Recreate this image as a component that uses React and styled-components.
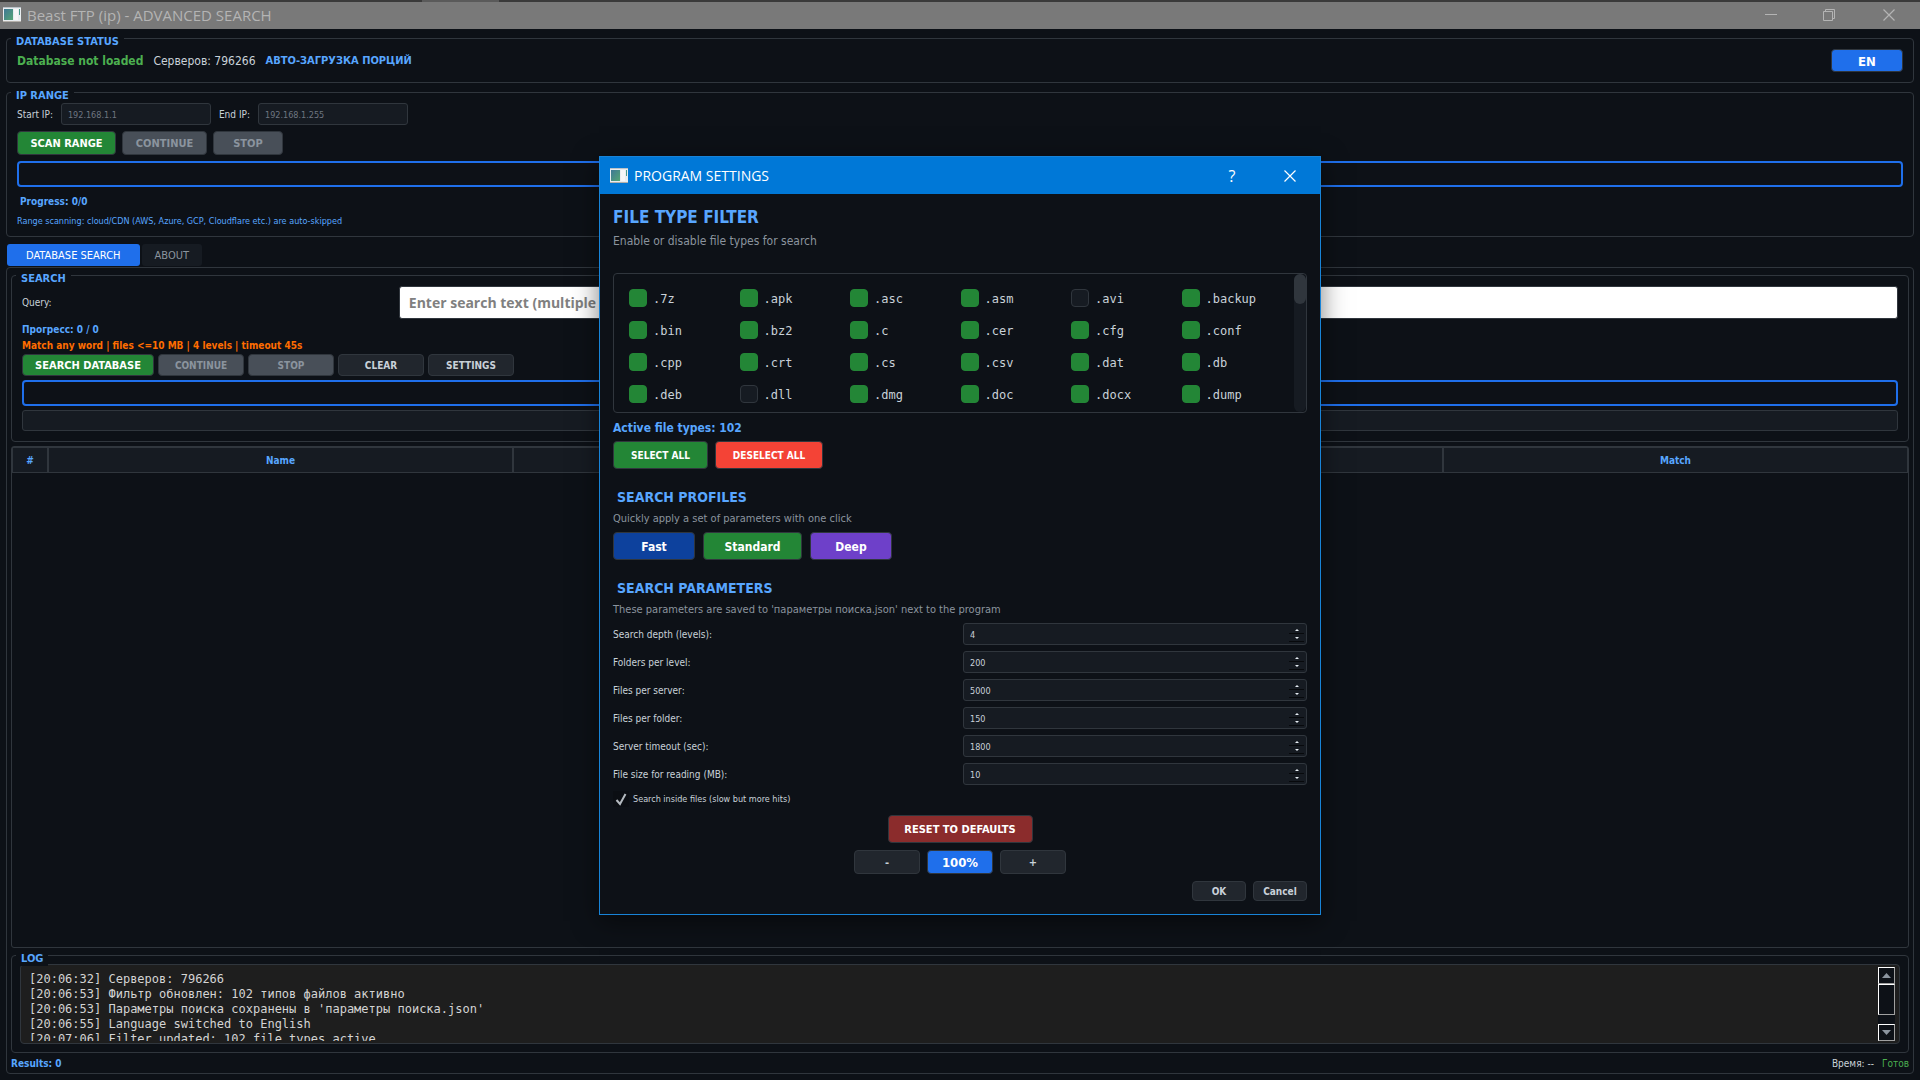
import React, { useState } from "react";
import styled, { createGlobalStyle } from "styled-components";

const GlobalStyle = createGlobalStyle`
    * {
        box-sizing: border-box;
    }

    body {
        margin: 0;
        background-color: #0d1117;
        color: #c9d1d9;
        font-family: "DejaVu Sans Condensed", "DejaVu Sans", sans-serif;
        font-size: 10px;
    }

    h1, h2, h3, p {
        margin: 0;
    }

    button, input {
        font-family: inherit;
    }
`;

// Window
const Window = styled.div`
    min-height: 100vh;
    display: flex;
    flex-direction: column;
`;

const DesktopStrip = styled.div`
    height: 2px;
    background: linear-gradient(90deg, #3a3a3a 22%, #5a5a5a 22%, #5a5a5a 26%, #3a3a3a 26%);
`;

const TitleBar = styled.header`
    display: flex;
    align-items: center;
    height: 27px;
    padding: 0 0 2px 3px;
    background-color: #797979;
    color: #b4b4b4;

    h1 {
        flex: 1;
        margin-left: 6px;
        font: 400 15px/20px "Open Sans", sans-serif;
    }
`;

const CaptionButton = styled.button`
    display: flex;
    align-items: center;
    justify-content: center;
    width: ${props => props.$width || 58}px;
    height: 100%;
    padding: 0;
    border: 0;
    background: none;
    color: inherit;
    font: 400 16px/20px "Open Sans", sans-serif;
`;

const Content = styled.main`
    flex: 1;
    display: flex;
    flex-direction: column;
    padding: 9px 6px 6px;
`;

// Group boxes
const Group = styled.section`
    position: relative;
    display: flex;
    flex-direction: column;
    gap: ${props => props.$gap || 6}px;
    padding: ${props => props.$padding || "10px"};
    border: 1px solid #30363d;
    border-radius: 4px;
`;

const GroupTitle = styled.h2`
    position: absolute;
    top: -4px;
    left: 4px;
    padding: 0 5px;
    background-color: #0d1117;
    color: #58a6ff;
    font-size: 11px;
    line-height: 14px;
`;

const Row = styled.div`
    display: flex;
    align-items: center;
    justify-content: ${props => props.$justify || "flex-start"};
    gap: ${props => props.$gap || 8}px;
`;

const Spacer = styled.div`
    flex: 1;
`;

const Stack = styled.div`
    display: flex;
    flex-direction: column;
    gap: ${props => props.$gap}px;
`;

const Text = styled.span`
    color: ${props => props.$color || "#c9d1d9"};
    font-size: ${props => props.$size || 10}px;
    font-weight: ${props => (props.$bold ? 700 : 400)};
    line-height: ${props => props.$line || 14}px;
    padding-left: ${props => props.$indent || 0}px;
`;

const Label = styled.label`
    padding-top: 1px;
    font-size: 10px;
    line-height: 14px;
`;

// Controls
const variants = {
    plain: ["#21262d", "#c9d1d9"],
    disabled: ["#484f58", "#8b949e"],
    green: ["#238636", "#ffffff"],
    red: ["#f44336", "#ffffff"],
    maroon: ["#8b2c2c", "#ffffff"],
    navy: ["#0d419d", "#ffffff"],
    purple: ["#6e40c9", "#ffffff"],
    blue: ["#1f6feb", "#ffffff"],
};

const Button = styled.button`
    width: ${props => props.$width}px;
    height: ${props => props.$height || 24}px;
    padding: 2px 0 0;
    border: 1px solid #30363d;
    border-radius: 4px;
    background-color: ${props => variants[props.$variant || "plain"][0]};
    color: ${props => variants[props.$variant || "plain"][1]};
    font-size: ${props => props.$size || 11}px;
    font-weight: 700;
    line-height: 16px;
    white-space: nowrap;
`;

const IpInput = styled.input`
    width: 150px;
    height: 22px;
    padding: 1px 6px 0;
    border: 1px solid #30363d;
    border-radius: 3px;
    background-color: #161b22;
    color: #c9d1d9;
    font-size: 9px;

    &::placeholder {
        color: #6e7681;
        opacity: 1;
    }
`;

const ProgressBar = styled.div`
    height: 26px;
    border: 2px solid #1f6feb;
    border-radius: 4px;
`;

const CurrentFile = styled.div`
    height: 21px;
    border: 1px solid #30363d;
    border-radius: 3px;
    background-color: #161b22;
`;

// Tabs
const Tabs = styled.nav`
    display: flex;
    gap: 2px;
    margin: 7px 1px 1px;
`;

const Tab = styled.button`
    height: 22px;
    padding: 0 ${props => (props.$active ? 19 : 13)}px;
    border: 0;
    border-radius: 3px;
    background-color: ${props => (props.$active ? "#1f6feb" : "#161b22")};
    color: ${props => (props.$active ? "#ffffff" : "#8b949e")};
    font-size: 11px;
`;

const Pane = styled.div`
    flex: 1;
    display: flex;
    flex-direction: column;
    gap: 4px;
    padding: 7px 4px 2px;
    border: 1px solid #30363d;
    border-radius: 4px;
`;

const QueryRow = styled.div`
    display: grid;
    grid-template-columns: 1fr 4fr;
    gap: 2px;
    align-items: center;
`;

const QueryInput = styled.input`
    height: 33px;
    padding: 0 9px;
    border: 1px solid #30363d;
    border-radius: 3px;
    background-color: #ffffff;
    font: 700 14px/20px "Open Sans", sans-serif;

    &::placeholder {
        color: #808080;
        opacity: 1;
    }
`;

const ResultsFrame = styled.div`
    flex: 1;
    min-height: 200px;
    margin-bottom: 3px;
    border: 1px solid #30363d;
    border-radius: 3px;
`;

const ResultsTable = styled.table`
    width: 100%;
    table-layout: fixed;
    border-spacing: 0;

    th {
        height: 26px;
        padding: 0;
        border: 1px solid #30363d;
        background-color: #161b22;
        color: #58a6ff;
        font-size: 10px;
    }

    th:first-child {
        width: 36px;
    }
`;

// Log
const LogBox = styled.div`
    display: flex;
    height: 80px;
    padding: 2px 4px 2px 8px;
    border: 1px solid #30363d;
    border-radius: 4px;
    background-color: #1e1e1e;
`;

const LogText = styled.pre`
    flex: 1;
    margin: 0;
    padding-top: 5px;
    overflow: hidden;
    color: #d4d4d4;
    font: 12px/15px "DejaVu Sans Mono", monospace;
`;

const LogScroll = styled.div`
    display: flex;
    flex-direction: column;
    width: 17px;
    background-color: #0d1117;
`;

const ScrollPart = styled.div`
    display: flex;
    align-items: center;
    justify-content: center;
    height: ${props => props.$height}px;
    border: 1px solid;
    border-color: #ffffff #a0a0a0 #a0a0a0 #ffffff;
`;

// Dialog
const Overlay = styled.div`
    position: absolute;
    top: 156px;
    left: 0;
    right: 0;
    display: flex;
    justify-content: center;
    pointer-events: none;
`;

const Dialog = styled.section`
    width: 722px;
    border: 1px solid #1883d7;
    background-color: #0d1117;
    box-shadow: 0 6px 24px rgba(0, 0, 0, 0.5);
    pointer-events: auto;
`;

const DialogTitle = styled.header`
    display: flex;
    align-items: center;
    height: 37px;
    padding-left: 10px;
    background-color: #0078d7;
    color: #ffffff;

    h2 {
        flex: 1;
        margin-left: 6px;
        font: 400 14px/20px "Open Sans", sans-serif;
    }
`;

const DialogBody = styled.div`
    padding: 13px;
`;

const Heading = styled.h3`
    padding-left: ${props => (props.$large ? 0 : 4)}px;
    margin-top: ${props => (props.$large ? 0 : 18)}px;
    color: #58a6ff;
    font-size: ${props => (props.$large ? 17 : 14)}px;
    line-height: 20px;
`;

const Hint = styled.p`
    margin: ${props => (props.$large ? "6px 0 24px" : "4px 0 5px")};
    color: #8b949e;
    font-size: ${props => (props.$large ? 12 : 11)}px;
    line-height: 16px;
`;

const TypesFrame = styled.div`
    display: flex;
    height: 140px;
    border: 1px solid #30363d;
    border-radius: 4px;
    overflow: hidden;
`;

const TypesGrid = styled.div`
    flex: 1;
    display: grid;
    grid-template-columns: repeat(6, 1fr);
    grid-auto-rows: 18px;
    row-gap: 14px;
    padding: 15px 2px 0 15px;
`;

const TypeItem = styled.label`
    display: flex;
    align-items: center;
    gap: 6px;
    font: 12px/18px "DejaVu Sans Mono", monospace;

    span {
        padding-top: 1px;
    }

    input {
        appearance: none;
        width: 18px;
        height: 18px;
        margin: 0;
        border: 1px solid #30363d;
        border-radius: 4px;
        background-color: #161b22;
    }

    input:checked {
        border-color: #238636;
        background-color: #238636;
    }
`;

const TypesScroll = styled.div`
    width: 12px;
    border-radius: 6px;
    background-color: #161b22;

    div {
        height: 30px;
        border-radius: 6px;
        background-color: #30363d;
    }
`;

const ActiveCount = styled.p`
    margin: 6px 0 4px;
    color: #58a6ff;
    font-size: 12px;
    font-weight: 700;
    line-height: 18px;
`;

const ParamRow = styled.div`
    display: grid;
    grid-template-columns: 350px 1fr;
    align-items: center;
`;

const SpinBox = styled.div`
    display: flex;
    align-items: center;
    height: 22px;
    padding-right: 2px;
    border: 1px solid #30363d;
    border-radius: 3px;
    background-color: #161b22;

    input {
        flex: 1;
        min-width: 0;
        padding: 1px 6px 0;
        border: 0;
        background: none;
        color: #c9d1d9;
        font-size: 9px;
        appearance: textfield;
    }

    input::-webkit-inner-spin-button {
        appearance: none;
    }
`;

const SpinButton = styled.button`
    display: flex;
    align-items: center;
    justify-content: center;
    width: 15px;
    height: 8px;
    padding: 0;
    border: 0;
    border-bottom: 1px solid #07090c;
    background: none;
    color: #e6edf3;
`;

const InsideFiles = styled.label`
    display: flex;
    align-items: center;
    gap: 4px;
    margin: 4px 0 6px;
    font-size: 9px;
    line-height: 20px;

    input {
        appearance: none;
        width: 16px;
        height: 16px;
        margin: 0;
    }

    input:checked {
        background: #0b0e13;
    }
`;

const CheckHolder = styled.span`
    position: relative;
    display: flex;

    svg {
        position: absolute;
        top: 2px;
        left: 2px;
        pointer-events: none;
    }
`;

const DialogRows = styled.div`
    display: flex;
    flex-direction: column;
    gap: 7px;
`;

const WindowIcon = () => (
    <svg width="18" height="16" viewBox="0 0 18 16" aria-hidden="true">
        <defs>
            <linearGradient id="pane" x1="0" y1="0" x2="1" y2="1">
                <stop offset="0" stopColor="#3f7896" />
                <stop offset="1" stopColor="#55a574" />
            </linearGradient>
        </defs>
        <rect x="0" y="0" width="18" height="15" fill="#e9edf0" />
        <rect x="0" y="0" width="18" height="1" fill="#b9c2c8" />
        <rect x="0" y="14" width="18" height="1" fill="#b4b0aa" />
        <rect x="1" y="2" width="9" height="11" fill="url(#pane)" />
        <rect x="11" y="2" width="4" height="11" fill="#f7f7f7" />
        <rect x="16" y="2" width="1" height="6" fill="#4a9a8a" />
    </svg>
);

const CloseIcon = () => (
    <svg width="12" height="12" viewBox="0 0 12 12" aria-hidden="true">
        <path d="M0.5 0.5 11.5 11.5M11.5 0.5 0.5 11.5" stroke="currentColor" strokeWidth="1.2" />
    </svg>
);

const Arrow = ({ down, width = 9, height = 5, color = "currentColor" }) => (
    <svg width={width} height={height} viewBox="0 0 8 4" preserveAspectRatio="none" aria-hidden="true">
        <path d={down ? "M0 0h8L4 4z" : "M0 4h8L4 0z"} fill={color} />
    </svg>
);

const fileTypes = [
    ".7z", ".apk", ".asc", ".asm", ".avi", ".backup",
    ".bin", ".bz2", ".c", ".cer", ".cfg", ".conf",
    ".cpp", ".crt", ".cs", ".csv", ".dat", ".db",
    ".deb", ".dll", ".dmg", ".doc", ".docx", ".dump",
];

const params = [
    ["depth", "Search depth (levels):", 4],
    ["folders", "Folders per level:", 200],
    ["server-files", "Files per server:", 5000],
    ["folder-files", "Files per folder:", 150],
    ["timeout", "Server timeout (sec):", 1800],
    ["size", "File size for reading (MB):", 10],
];

const logLines = [
    "[20:06:32] Серверов: 796266",
    "[20:06:53] Фильтр обновлен: 102 типов файлов активно",
    "[20:06:53] Параметры поиска сохранены в 'параметры поиска.json'",
    "[20:06:55] Language switched to English",
    "[20:07:06] Filter updated: 102 file types active",
];

const SettingsDialog = () => {
    const [disabledTypes, setDisabledTypes] = useState([".avi", ".dll"]);

    const toggleType = (type) => {
        setDisabledTypes(
            disabledTypes.includes(type)
                ? disabledTypes.filter(item => item !== type)
                : [...disabledTypes, type]
        );
    };

    return (
        <Dialog role="dialog" aria-labelledby="settings-title">
            <DialogTitle>
                <WindowIcon />
                <h2 id="settings-title">PROGRAM SETTINGS</h2>
                <CaptionButton $width={56}>?</CaptionButton>
                <CaptionButton $width={60} aria-label="Close"><CloseIcon /></CaptionButton>
            </DialogTitle>
            <DialogBody>
                <Heading $large>FILE TYPE FILTER</Heading>
                <Hint $large>Enable or disable file types for search</Hint>
                <TypesFrame>
                    <TypesGrid>
                        {fileTypes.map(type => (
                            <TypeItem key={type}>
                                <input
                                    type="checkbox"
                                    checked={!disabledTypes.includes(type)}
                                    onChange={() => toggleType(type)}
                                />
                                <span>{type}</span>
                            </TypeItem>
                        ))}
                    </TypesGrid>
                    <TypesScroll><div /></TypesScroll>
                </TypesFrame>
                <ActiveCount>Active file types: 102</ActiveCount>
                <Row $gap={7}>
                    <Button $variant="green" $width={95} $height={28} $size={10} onClick={() => setDisabledTypes([])}>SELECT ALL</Button>
                    <Button $variant="red" $width={108} $height={28} $size={10} onClick={() => setDisabledTypes(fileTypes)}>DESELECT ALL</Button>
                </Row>

                <Heading>SEARCH PROFILES</Heading>
                <Hint>Quickly apply a set of parameters with one click</Hint>
                <Row>
                    <Button $variant="navy" $width={82} $height={28} $size={12}>Fast</Button>
                    <Button $variant="green" $width={99} $height={28} $size={12}>Standard</Button>
                    <Button $variant="purple" $width={82} $height={28} $size={12}>Deep</Button>
                </Row>

                <Heading>SEARCH PARAMETERS</Heading>
                <Hint>These parameters are saved to 'параметры поиска.json' next to the program</Hint>
                <Stack $gap={6}>
                    {params.map(([id, label, value]) => (
                        <ParamRow key={id}>
                            <Label htmlFor={id}>{label}</Label>
                            <SpinBox>
                                <input id={id} type="number" defaultValue={value} />
                                <div>
                                    <SpinButton aria-label="Increase"><Arrow width={4} height={2} /></SpinButton>
                                    <SpinButton aria-label="Decrease"><Arrow down width={4} height={2} /></SpinButton>
                                </div>
                            </SpinBox>
                        </ParamRow>
                    ))}
                </Stack>
                <InsideFiles>
                    <CheckHolder>
                        <input type="checkbox" defaultChecked />
                        <svg width="12" height="13" viewBox="0 0 12 13" aria-hidden="true">
                            <path d="M1.5 7 5 11 10.5 1" fill="none" stroke="#b4bac0" strokeWidth="2" />
                        </svg>
                    </CheckHolder>
                    Search inside files (slow but more hits)
                </InsideFiles>
                <DialogRows>
                    <Row $justify="center">
                        <Button $variant="maroon" $width={145} $height={28}>RESET TO DEFAULTS</Button>
                    </Row>
                    <Row $justify="center" $gap={7}>
                        <Button $width={66}>-</Button>
                        <Button $variant="blue" $width={66} $size={13}>100%</Button>
                        <Button $width={66}>+</Button>
                    </Row>
                    <Row $justify="flex-end" $gap={7}>
                        <Button $width={54} $height={20} $size={10}>OK</Button>
                        <Button $width={54} $height={20} $size={10}>Cancel</Button>
                    </Row>
                </DialogRows>
            </DialogBody>
        </Dialog>
    );
};

const App = () => {
    return (
        <Window>
            <GlobalStyle />
            <DesktopStrip />
            <TitleBar>
                <WindowIcon />
                <h1>Beast FTP (ip) - ADVANCED SEARCH</h1>
                <CaptionButton aria-label="Minimize">
                    <svg width="12" height="12" viewBox="0 0 12 12"><path d="M0 5.5h12" stroke="currentColor" /></svg>
                </CaptionButton>
                <CaptionButton aria-label="Restore">
                    <svg width="12" height="12" viewBox="0 0 12 12">
                        <path d="M0.5 2.5h9v9h-9zM2.5 2.5v-2h9v9h-2" fill="none" stroke="currentColor" />
                    </svg>
                </CaptionButton>
                <CaptionButton $width={62} aria-label="Close"><CloseIcon /></CaptionButton>
            </TitleBar>

            <Content>
                <Stack $gap={9}>
                    <Group>
                        <GroupTitle>DATABASE STATUS</GroupTitle>
                        <Row $gap={10}>
                            <Text $bold $size={12} $line={16} $color="#4caf50">Database not loaded</Text>
                            <Text $size={12} $line={16}>Серверов: 796266</Text>
                            <Text $bold $size={11} $color="#58a6ff">АВТО-ЗАГРУЗКА ПОРЦИЙ</Text>
                            <Spacer />
                            <Button $variant="blue" $width={72} $height={23} $size={13}>EN</Button>
                        </Row>
                    </Group>
                    <Group $padding="10px 10px 7px">
                        <GroupTitle>IP RANGE</GroupTitle>
                        <Row>
                            <Label htmlFor="start-ip">Start IP:</Label>
                            <IpInput id="start-ip" placeholder="192.168.1.1" />
                            <Label htmlFor="end-ip">End IP:</Label>
                            <IpInput id="end-ip" placeholder="192.168.1.255" />
                        </Row>
                        <Row $gap={6}>
                            <Button $variant="green" $width={99}>SCAN RANGE</Button>
                            <Button $variant="disabled" $width={85} disabled>CONTINUE</Button>
                            <Button $variant="disabled" $width={70} disabled>STOP</Button>
                        </Row>
                        <ProgressBar />
                        <Stack $gap={2}>
                            <Text $bold $color="#58a6ff" $line={18} $indent={3}>Progress: 0/0</Text>
                            <Text $size={9} $color="#58a6ff" $line={16}>
                                Range scanning: cloud/CDN (AWS, Azure, GCP, Cloudflare etc.) are auto-skipped
                            </Text>
                        </Stack>
                    </Group>
                </Stack>

                <Tabs>
                    <Tab $active>DATABASE SEARCH</Tab>
                    <Tab>ABOUT</Tab>
                </Tabs>

                <Pane>
                    <Group $gap={4}>
                        <GroupTitle>SEARCH</GroupTitle>
                        <QueryRow>
                            <Label htmlFor="query">Query:</Label>
                            <QueryInput id="query" placeholder="Enter search text (multiple" />
                        </QueryRow>
                        <Stack $gap={1}>
                            <Text $bold $color="#58a6ff">Прогресс: 0 / 0</Text>
                            <Text $bold $color="#ff6d00" $line={15}>Match any word | files &lt;=10 MB | 4 levels | timeout 45s</Text>
                            <Row $gap={4}>
                                <Button $variant="green" $width={132} $height={22}>SEARCH DATABASE</Button>
                                <Button $variant="disabled" $width={86} $height={22} $size={10} disabled>CONTINUE</Button>
                                <Button $variant="disabled" $width={86} $height={22} $size={10} disabled>STOP</Button>
                                <Button $width={86} $height={22} $size={10}>CLEAR</Button>
                                <Button $width={86} $height={22} $size={10}>SETTINGS</Button>
                            </Row>
                        </Stack>
                        <ProgressBar />
                        <CurrentFile />
                    </Group>

                    <ResultsFrame>
                        <ResultsTable>
                            <thead>
                                <tr>
                                    <th>#</th>
                                    <th>Name</th>
                                    <th></th>
                                    <th></th>
                                    <th>Match</th>
                                </tr>
                            </thead>
                        </ResultsTable>
                    </ResultsFrame>

                    <Group $padding="8px">
                        <GroupTitle>LOG</GroupTitle>
                        <LogBox>
                            <LogText>{logLines.join("\n")}</LogText>
                            <LogScroll>
                                <ScrollPart $height={17}><Arrow color="#8b949e" /></ScrollPart>
                                <ScrollPart $height={31} />
                                <Spacer />
                                <ScrollPart $height={17}><Arrow down color="#8b949e" /></ScrollPart>
                            </LogScroll>
                        </LogBox>
                    </Group>

                    <Row>
                        <Text $bold $color="#58a6ff">Results: 0</Text>
                        <Spacer />
                        <Text>Время: --</Text>
                        <Text $color="#4caf50">Готов</Text>
                    </Row>
                </Pane>
            </Content>

            <Overlay>
                <SettingsDialog />
            </Overlay>
        </Window>
    );
};

export default App;
